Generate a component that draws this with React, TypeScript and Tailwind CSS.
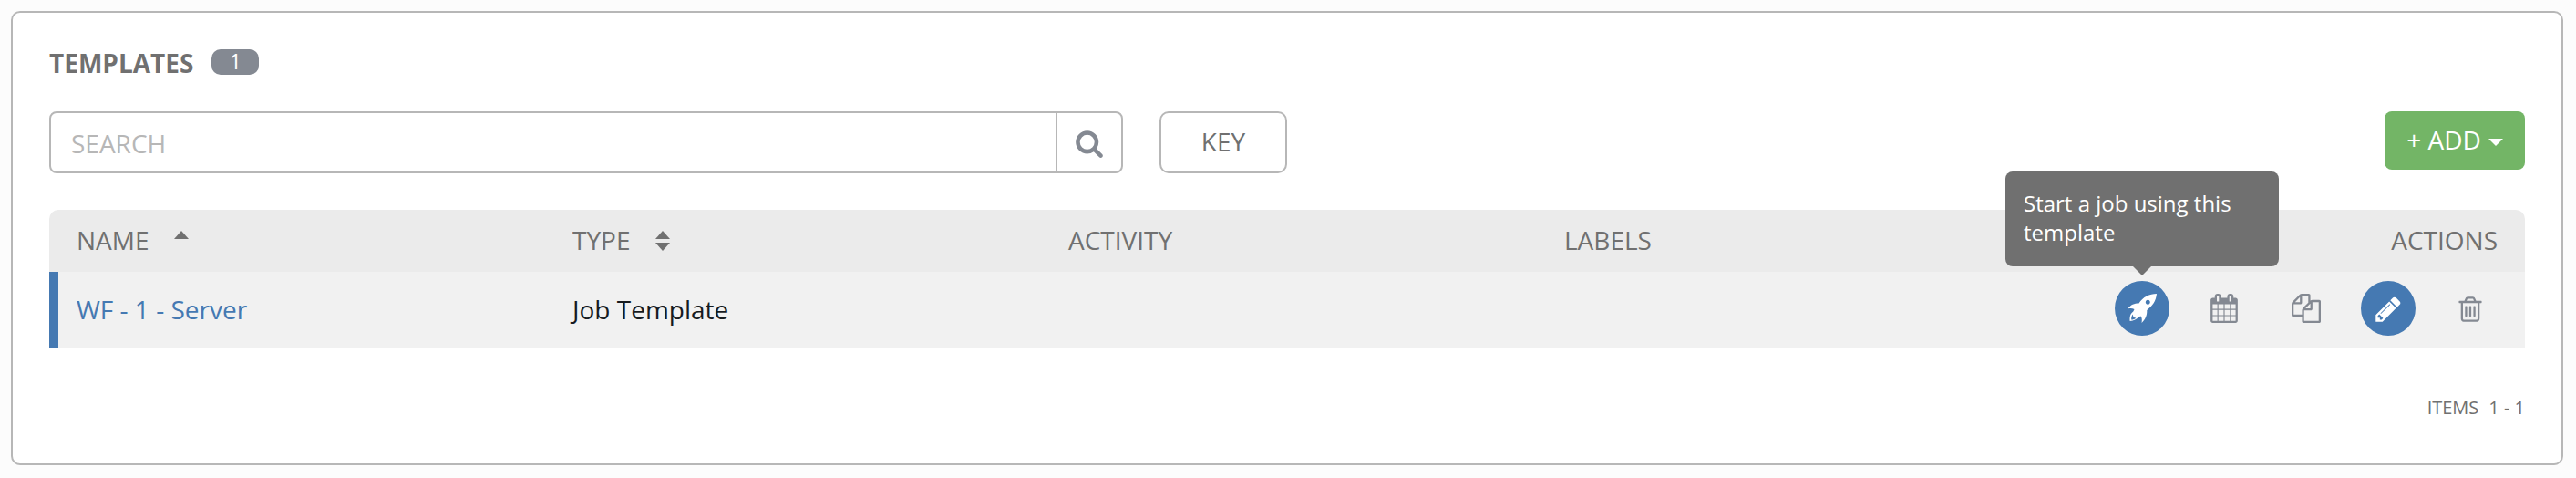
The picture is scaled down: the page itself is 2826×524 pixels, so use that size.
import type { ReactNode } from 'react';

const ICONS = {
  search:
    'M1216 832q0-185-131.5-316.5t-316.5-131.5-316.5 131.5-131.5 316.5 131.5 316.5 316.5 131.5 316.5-131.5 131.5-316.5zm512 832q0 52-38 90t-90 38q-54 0-90-38l-343-342q-179 124-399 124-143 0-273.5-55.5t-225-150-150-225-55.5-273.5 55.5-273.5 150-225 225-150 273.5-55.5 273.5 55.5 225 150 150 225 55.5 273.5q0 220-124 399l343 343q37 37 37 90z',
  calendar:
    'M192 1664h288v-288h-288v288zm352 0h320v-288h-320v288zm-352-352h288v-320h-288v320zm352 0h320v-320h-320v320zm-352-384h288v-288h-288v288zm736 736h320v-288h-320v288zm-384-736h320v-288h-320v288zm768 736h288v-288h-288v288zm-384-352h320v-320h-320v320zm-352-864v-288q0-13-9.5-22.5t-22.5-9.5h-64q-13 0-22.5 9.5t-9.5 22.5v288q0 13 9.5 22.5t22.5 9.5h64q13 0 22.5-9.5t9.5-22.5zm736 864h288v-320h-288v320zm-384-384h320v-288h-320v288zm384 0h288v-288h-288v288zm32-480v-288q0-13-9.5-22.5t-22.5-9.5h-64q-13 0-22.5 9.5t-9.5 22.5v288q0 13 9.5 22.5t22.5 9.5h64q13 0 22.5-9.5t9.5-22.5zm384-64v1280q0 52-38 90t-90 38h-1408q-52 0-90-38t-38-90v-1280q0-52 38-90t90-38h128v-96q0-66 47-113t113-47h64q66 0 113 47t47 113v96h384v-96q0-66 47-113t113-47h64q66 0 113 47t47 113v96h128q52 0 90 38t38 90z',
  copy:
    'M1696 384q40 0 68 28t28 68v1216q0 40-28 68t-68 28h-960q-40 0-68-28t-28-68v-288h-544q-40 0-68-28t-28-68v-672q0-40 20-88t48-76l408-408q28-28 76-48t88-20h416q40 0 68 28t28 68v328q68-40 128-40h416zm-544 213l-299 299h299v-299zm-640-384l-299 299h299v-299zm196 647l316-316v-416h-384v416q0 40-28 68t-68 28h-416v640h512v-256q0-40 20-88t48-76zm956 804v-1152h-384v416q0 40-28 68t-68 28h-416v640h896z',
  pencil:
    'M491 1536l91-91-235-235-91 91v107h128v128h107zm523-928q0-22-22-22-10 0-17 7l-542 542q-7 7-7 17 0 22 22 22 10 0 17-7l542-542q7-7 7-17zm-54-192l416 416-832 832h-416v-416zm683 96q0 53-37 90l-166 166-416-416 166-165q36-38 90-38 53 0 91 38l235 234q37 39 37 91z',
  trash:
    'M704 736v576q0 14-9 23t-23 9h-64q-14 0-23-9t-9-23v-576q0-14 9-23t23-9h64q14 0 23 9t9 23zm256 0v576q0 14-9 23t-23 9h-64q-14 0-23-9t-9-23v-576q0-14 9-23t23-9h64q14 0 23 9t9 23zm256 0v576q0 14-9 23t-23 9h-64q-14 0-23-9t-9-23v-576q0-14 9-23t23-9h64q14 0 23 9t9 23zm128 724v-948h-896v948q0 22 7 40.5t14.5 27 10.5 8.5h832q3 0 10.5-8.5t14.5-27 7-40.5zm-672-1076h448l-48-117q-7-9-17-11h-317q-10 2-17 11zm928 32v64q0 14-9 23t-23 9h-96v948q0 83-47 143.5t-113 60.5h-832q-66 0-113-58.5t-47-141.5v-952h-96q-14 0-23-9t-9-23v-64q0-14 9-23t23-9h309l70-167q15-37 54-63t79-26h320q40 0 79 26t54 63l70 167h309q14 0 23 9t9 23z',
};

function Icon({ name, className }: { name: keyof typeof ICONS; className: string }) {
  return (
    <svg viewBox="0 0 1792 1792" fill="currentColor" className={className}>
      <path d={ICONS[name]} />
    </svg>
  );
}

function Rocket() {
  return (
    <svg viewBox="0 0 32 32" className="size-8" fill="currentColor">
      <path
        fillRule="evenodd"
        d="M32 0C24 0 17 3.500 12.500 10.500C7.500 10.500 3.500 12 0.300 16.500C3 15.800 5.500 16 7.500 17L6.300 19.500C3 22 2.300 25 2.600 30C7 29.800 10 28 12 25.500L14.500 24.500C16 26.500 16 29 15.500 32C19.500 28 21.500 24 21.300 18C27.500 13 31.300 8 32 0ZM22.300 6.800A2.500 2.500 0 1 1 22.290 6.800ZM5.900 22.500C5.800 25 7 26.500 9.300 26.500C8 28 6.200 28.500 4.200 28.500C4.100 26 4.500 24 5.900 22.500Z"
      />
    </svg>
  );
}

function Column({ children }: { children: ReactNode }) {
  return <div className="flex w-[544px] items-center">{children}</div>;
}

function Action({ children, filled = false }: { children: ReactNode; filled?: boolean }) {
  return (
    <button
      className={
        filled
          ? 'relative flex size-[60px] items-center justify-center rounded-full bg-[#4579b2] text-white'
          : 'relative flex size-[60px] items-center justify-center text-[#848992]'
      }
    >
      {children}
    </button>
  );
}

export default function App() {
  return (
    <div className="h-[524px] bg-[#fcfcfc] px-3 pt-3 font-['Open_Sans',sans-serif] text-[28px] leading-10 text-[#707070]">
      <main className="h-[498px] w-[2800px] rounded-[10px] border-2 border-[#b7b7b7] bg-white px-10">
        <header className="flex h-[108px] items-center pt-0.5">
          <h1 className="font-bold">TEMPLATES</h1>
          <span className="mb-0.5 ml-5 flex h-7 w-[52px] items-center justify-center rounded-[10px] bg-[#848992] pb-[3px] text-[24px] text-white">
            1
          </span>
        </header>

        <div className="flex h-[108px] items-start">
          <div className="flex h-[68px] w-[1178px] rounded-lg border-2 border-[#b7b7b7]">
            <div className="flex flex-1 items-center pl-[22px] pt-0.5 text-[#b7b7b7]">SEARCH</div>
            <button className="flex w-[72px] items-center justify-center border-l-2 border-[#b7b7b7] pt-0.5 text-[#848992]">
              <Icon name="search" className="size-8" />
            </button>
          </div>
          <button className="ml-10 h-[68px] w-[140px] rounded-[10px] border-2 border-[#b7b7b7] pb-0.5">KEY</button>
          <button className="ml-auto flex h-16 w-[154px] items-center justify-center rounded-lg bg-[#73b566] pb-0.5 text-white">
            + ADD
            <span className="ml-2 mt-1.5 border-x-8 border-t-8 border-x-transparent border-t-white" />
          </button>
        </div>

        <section>
          <div className="flex h-[68px] items-center rounded-t-[10px] bg-[#ebebeb] px-[30px] pb-0.5">
            <Column>
              NAME
              <span className="mb-[11px] ml-[27px] border-x-8 border-b-[9px] border-x-transparent border-b-[#707070]" />
            </Column>
            <Column>
              TYPE
              <span className="ml-7 mt-0.5 flex flex-col gap-1">
                <span className="border-x-8 border-b-[9px] border-x-transparent border-b-[#707070]" />
                <span className="border-x-8 border-t-[9px] border-x-transparent border-t-[#707070]" />
              </span>
            </Column>
            <Column>ACTIVITY</Column>
            <Column>LABELS</Column>
            <div className="ml-auto">ACTIONS</div>
          </div>
          <div className="flex h-[84px] items-center border-l-[10px] border-[#4579b2] bg-[#f1f1f1] pb-0.5 pl-5 pr-[30px]">
            <Column>
              <a className="text-[#4579b2]">WF - 1 - Server</a>
            </Column>
            <Column>
              <span className="text-[#161b1f]">Job Template</span>
            </Column>
            <div className="ml-auto flex gap-[30px] pb-0.5">
              <Action filled>
                <Rocket />
                <div className="absolute bottom-[76px] left-[-120px] h-[104px] w-[300px] rounded-lg bg-[#707070] px-5 py-[19px] text-left text-[24px] leading-8 text-white">
                  Start a job using this template
                  <span className="absolute left-[140px] top-[104px] border-x-10 border-t-10 border-x-transparent border-t-[#707070]" />
                </div>
              </Action>
              <Action>
                <Icon name="calendar" className="size-8" />
              </Action>
              <Action>
                <Icon name="copy" className="size-8" />
              </Action>
              <Action filled>
                <Icon name="pencil" className="mt-px size-8" />
              </Action>
              <Action>
                <Icon name="trash" className="mt-px size-8" />
              </Action>
            </div>
          </div>
        </section>

        <footer className="mt-[45px] flex justify-end gap-[11px] text-[20px]">
          <span>ITEMS</span>
          <span>1 - 1</span>
        </footer>
      </main>
    </div>
  );
}
